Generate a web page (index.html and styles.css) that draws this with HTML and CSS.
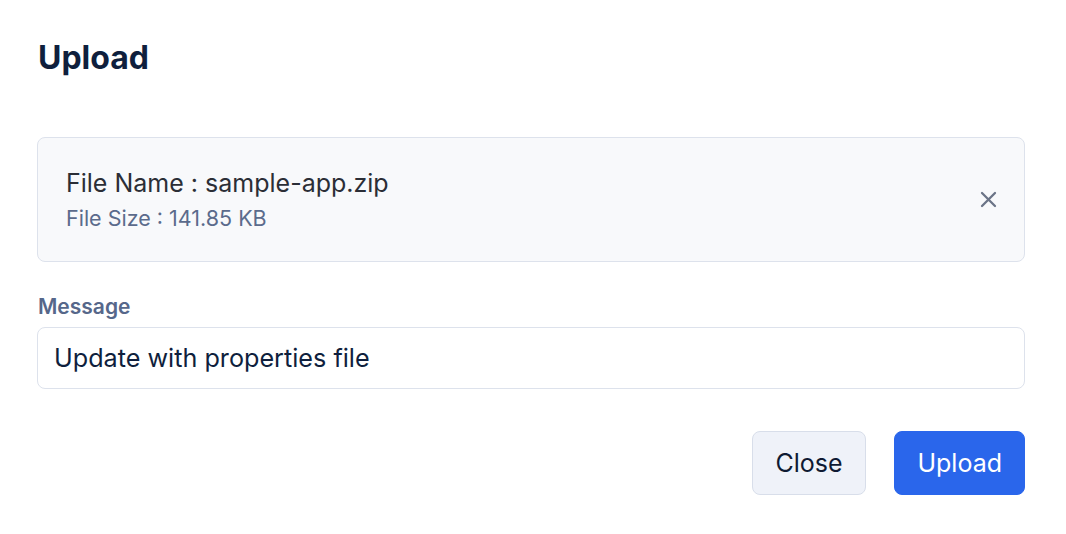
FILE: index.html
```html
<!DOCTYPE html>
<html lang="en">
<head>
<meta charset="utf-8">
<title>Upload</title>
<link rel="stylesheet" href="styles.css">
</head>
<body>
<div class="dialog">
  <h1 class="title">Upload</h1>
  <div class="file-card">
    <div class="file-info">
      <div class="file-name">File Name : sample-app.zip</div>
      <div class="file-size">File Size : 141.85 KB</div>
    </div>
    <button class="remove" aria-label="Remove file">
      <svg width="17" height="17" viewBox="0 0 17 17" fill="none" stroke="currentColor" stroke-width="2.3" stroke-linecap="round">
        <path d="M2 2L15 15M15 2L2 15"/>
      </svg>
    </button>
  </div>
  <label class="label" for="msg">Message</label>
  <input id="msg" class="input" type="text" value="Update with properties file">
  <div class="actions">
    <button class="btn btn-secondary">Close</button>
    <button class="btn btn-primary">Upload</button>
  </div>
</div>
</body>
</html>
```

FILE: styles.css
```css
* { box-sizing: border-box; }
html, body { margin: 0; padding: 0; background: #ffffff; }
body {
  font-family: Inter, "Noto Sans", sans-serif;
  color: #0f1f3d;
}
.dialog {
  padding: 36px 41px 0 37px;
  display: flex;
  flex-direction: column;
}
.title {
  margin: 0 0 0 1px;
  font-size: 32px;
  line-height: 44px;
  font-weight: 700;
  color: #0f1f3d;
}
.file-card {
  margin-top: 57px;
  height: 125px;
  border: 1px solid #dde2ec;
  border-radius: 8px;
  background: #f8f9fb;
  display: flex;
  align-items: center;
  padding: 0 27px 0 28px;
}
.file-info {
  flex: 1;
  display: flex;
  flex-direction: column;
  gap: 5px;
}
.file-name {
  font-size: 25px;
  line-height: 32px;
  color: #2b2e36;
}
.file-size {
  font-size: 21.5px;
  line-height: 28px;
  color: #5b6b8c;
}
.remove {
  border: 0;
  background: transparent;
  padding: 0;
  width: 17px;
  height: 17px;
  color: #6b7487;
  display: flex;
  cursor: pointer;
}
.label {
  margin: 30px 0 0 1px;
  font-size: 21px;
  line-height: 30px;
  font-weight: 600;
  color: #56678a;
}
.input {
  margin-top: 5px;
  height: 62px;
  width: 100%;
  border: 1px solid #dde2ec;
  border-radius: 8px;
  background: #ffffff;
  padding: 0 16px;
  font-family: inherit;
  font-size: 25.2px;
  color: #0f1f3d;
  outline: none;
}
.actions {
  margin-top: 42px;
  display: flex;
  justify-content: flex-end;
  gap: 28px;
}
.btn {
  height: 64px;
  border-radius: 8px;
  font-family: inherit;
  font-size: 25px;
  padding: 0 22px;
  cursor: pointer;
}
.btn-secondary {
  padding: 0 23px 0 22px;
  background: #eff2f9;
  border: 1px solid #d8deea;
  color: #0f1a33;
}
.btn-primary {
  background: #2a66eb;
  border: 1px solid #2a66eb;
  color: #ffffff;
}
```
